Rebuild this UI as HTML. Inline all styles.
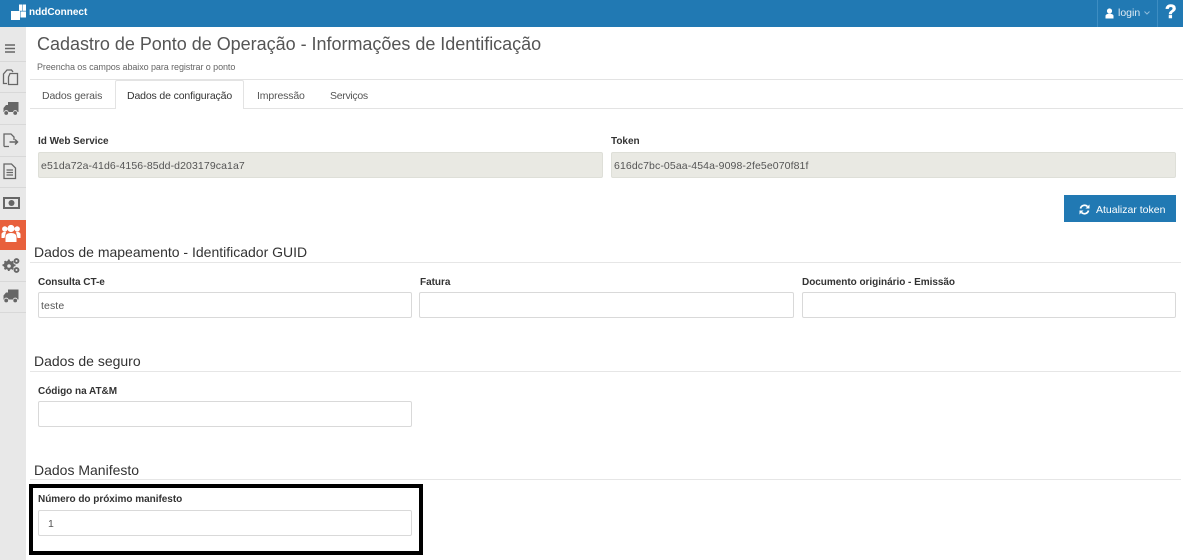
<!DOCTYPE html>
<html><head><meta charset="utf-8"><style>
html,body{margin:0;padding:0;background:#fff;width:1189px;height:560px;overflow:hidden}
body{font-family:"Liberation Sans",sans-serif;color:#444;position:relative}
.a{position:absolute;white-space:nowrap}
.top{left:0;top:0;width:1183px;height:27px;background:#2179b3}
.side{left:0;top:27px;width:26px;height:533px;background:#e8e8e8}
.sep{left:0;width:26px;height:1px;background:#d8d8d8}
.lab{font-size:10px;font-weight:bold;color:#333;letter-spacing:-.03px;line-height:12px}
.inp{box-sizing:border-box;height:26px;border:1px solid #d9d9d9;border-radius:2px;background:#fff;font-size:10.5px;line-height:26px;padding-left:2px;color:#555;letter-spacing:.1px}
.dis{background:#e9e9e3;border-color:#dedfd8}
.h{font-size:14px;color:#333;line-height:16px}
.hr{height:1px;background:#e6e6e6;left:30px;width:1151px}
.tab{font-size:10.5px;color:#555;letter-spacing:-.14px;line-height:12px}
svg{position:absolute;display:block}
</style></head><body>
<div class="a top"></div>
<svg style="left:0;top:0" width="30" height="24" viewBox="0 0 30 24"><g fill="#fff"><rect x="11" y="11" width="9" height="9"/><rect x="20.500" y="11.500" width="5.500" height="6"/><rect x="19" y="4.500" width="3.500" height="6.300"/><rect x="23" y="4.500" width="3" height="6.300"/></g></svg>
<div class="a" style="left:29px;top:6px;font-size:10px;font-weight:bold;color:#fff;line-height:13px">nddConnect</div>
<div class="a" style="left:1097px;top:0;width:1px;height:27px;background:#3d8dc2"></div>
<div class="a" style="left:1157px;top:0;width:1px;height:27px;background:#3d8dc2"></div>
<svg style="left:1105px;top:8px" width="9" height="11" viewBox="0 0 9 11"><circle cx="4.500" cy="3" r="2.600" fill="#fff"/><path d="M.5 10.500V8C.5 6.500 2 5.700 4.500 5.700S8.500 6.500 8.500 8v2.500z" fill="#fff"/></svg>
<div class="a" style="left:1118px;top:7px;font-size:10.500px;color:#dfeaf3">login</div>
<svg style="left:1144px;top:11px" width="6" height="4" viewBox="0 0 6 4"><path d="M.5.500 3 3 5.500.500" fill="none" stroke="#8fbcdb"/></svg>
<div class="a" style="left:1165px;top:2px;font-size:19px;font-weight:bold;color:#fff;line-height:22px;-webkit-text-stroke:.6px #fff">?</div>

<div class="a side"></div>
<div class="a sep" style="top:61px"></div>
<div class="a sep" style="top:92px"></div>
<div class="a sep" style="top:124px"></div>
<div class="a sep" style="top:156px"></div>
<div class="a sep" style="top:187px"></div>
<div class="a sep" style="top:281px"></div>
<div class="a sep" style="top:312px"></div>
<div class="a" style="left:0;top:220px;width:26px;height:30px;background:#e8603c"></div>

<svg style="left:0;top:27px" width="26" height="290" viewBox="0 0 26 290">
<g fill="none" stroke="#666" stroke-width="1.300">
<path d="M5 18h10M5 21.500h10M5 25h10" stroke-width="1.500"/>
<path d="M7 56.500H3.500V47L7 43h4.500l1.500 2M10 46.500h7.500v11H8.500v-7.500z"/>
<path d="M4 119.500V107h7l3 3v3M4 119.500h5"/>
<path d="M9.500 115h8M15 112.500l2.500 2.500-2.500 2.500" stroke-width="1.500"/>
<path d="M4 137h7.500l4 4v10.500H4zM6.500 143h6.500M6.500 145.500h6.500M6.500 148h6.500"/>
</g>
<g fill="#666">
<path d="M3.500 85V81l2.500-3H8V75H18.500V85H17.500a2.300 2.300 0 0 0-4.500 0H8.500a2.300 2.300 0 0 0-4.500 0z"/>
<circle cx="6.200" cy="86" r="1.900"/><circle cx="15.200" cy="86" r="1.900"/>
<path d="M3.500 272.500V268.500l2.500-3H8V262.500H18.500V272.500H17.500a2.300 2.300 0 0 0-4.500 0H8.500a2.300 2.300 0 0 0-4.500 0z"/>
<circle cx="6.200" cy="273.500" r="1.900"/><circle cx="15.200" cy="273.500" r="1.900"/>
<rect x="3" y="170" width="17" height="12"/>
</g>
<rect x="5" y="172" width="13" height="8" fill="#e8e8e8"/>
<circle cx="11.500" cy="176" r="3" fill="#666"/>
<g fill="#666" transform="translate(1,2)">
<path d="M9 232l1.500.5 1-.8 1.300 1-.5 1.300.7 1.200 1.500.2v1.700l-1.500.3-.7 1.200.5 1.300-1.300 1-1-.8-1.500.5-.5 1.400H7l-.4-1.400-1.300-.5-1 .8-1.300-1 .5-1.300-.7-1.200L1.500 237v-1.700l1.300-.2.700-1.200-.5-1.300 1.300-1 1 .8 1.300-.5.400-1.400H8.600z"/>
</g>
<circle cx="9" cy="239" r="1.800" fill="#e8e8e8"/>
<circle cx="16.500" cy="234" r="2.900" fill="#666"/><circle cx="16.500" cy="243" r="2.900" fill="#666"/>
<circle cx="16.500" cy="234" r="1" fill="#e8e8e8"/><circle cx="16.500" cy="243" r="1" fill="#e8e8e8"/>
<g fill="#fff">
<circle cx="11" cy="201.500" r="3.600"/><circle cx="4.800" cy="202" r="2.700"/><circle cx="17.200" cy="202" r="2.700"/>
<path d="M5.500 215v-5c0-2.500 2-4 5.500-4s5.500 1.500 5.500 4v5zM1.500 211v-3.500c0-1.500 1-2.500 3-2.500h1.500l-1.500 6zM20.500 211v-3.500c0-1.500-1-2.500-3-2.500h-1.500l1.500 6z"/>
</g>
</svg>

<div class="a" style="left:37px;top:34px;font-size:18px;color:#555;letter-spacing:-.02px">Cadastro de Ponto de Operação - Informações de Identificação</div>
<div class="a" style="left:37px;top:62px;font-size:9px;color:#666;letter-spacing:-.08px">Preencha os campos abaixo para registrar o ponto</div>
<div class="a" style="left:30px;top:79px;width:1153px;height:1px;background:#e3e3e3"></div>
<div class="a" style="left:30px;top:108px;width:1153px;height:1px;background:#e3e3e3"></div>
<div class="a" style="left:115px;top:80px;width:129px;height:29px;background:#fff;border:1px solid #e3e3e3;border-bottom:none;box-sizing:border-box;border-radius:2px 2px 0 0"></div>
<div class="a tab" style="left:42px;top:90px">Dados gerais</div>
<div class="a tab" style="left:127px;top:90px;color:#333">Dados de configuração</div>
<div class="a tab" style="left:257px;top:90px">Impressão</div>
<div class="a tab" style="left:330px;top:90px;letter-spacing:-.3px">Serviços</div>

<div class="a lab" style="left:38px;top:136px">Id Web Service</div>
<div class="a inp dis" style="left:38px;top:152px;width:565px">e51da72a-41d6-4156-85dd-d203179ca1a7</div>
<div class="a lab" style="left:611px;top:136px">Token</div>
<div class="a inp dis" style="left:611px;top:152px;width:565px">616dc7bc-05aa-454a-9098-2fe5e070f81f</div>

<div class="a" style="left:1064px;top:195px;width:112px;height:27px;background:#2179b3"></div>
<svg style="left:1079px;top:204px" width="11" height="11" viewBox="0 0 11 11"><path d="M1.500 4.500A4.200 4.200 0 0 1 8.500 2.500M9.500 6.500A4.200 4.200 0 0 1 2.500 8.500" fill="none" stroke="#fff" stroke-width="1.700"/><path d="M10.500.5v4h-4zM.5 10.500v-4h4z" fill="#fff"/></svg>
<div class="a" style="left:1096px;top:204px;font-size:10.500px;color:#fff;line-height:12px">Atualizar token</div>

<div class="a h" style="left:34px;top:244px">Dados de mapeamento - Identificador GUID</div>
<div class="a hr" style="top:262px"></div>
<div class="a lab" style="left:38px;top:277px">Consulta CT-e</div>
<div class="a inp" style="left:38px;top:292px;width:374px">teste</div>
<div class="a lab" style="left:420px;top:277px">Fatura</div>
<div class="a inp" style="left:419px;top:292px;width:375px"></div>
<div class="a lab" style="left:802px;top:277px">Documento originário - Emissão</div>
<div class="a inp" style="left:802px;top:292px;width:374px"></div>

<div class="a h" style="left:34px;top:353px">Dados de seguro</div>
<div class="a hr" style="top:371px"></div>
<div class="a lab" style="left:38px;top:386px">Código na AT&amp;M</div>
<div class="a inp" style="left:38px;top:401px;width:374px"></div>

<div class="a h" style="left:34px;top:462px">Dados Manifesto</div>
<div class="a hr" style="top:479px"></div>
<div class="a" style="left:29px;top:484px;width:394px;height:71px;box-sizing:border-box;border:4px solid #000"></div>
<div class="a lab" style="left:38px;top:494px">Número do próximo manifesto</div>
<div class="a inp" style="left:38px;top:510px;width:374px;padding-left:9px">1</div>
</body></html>
